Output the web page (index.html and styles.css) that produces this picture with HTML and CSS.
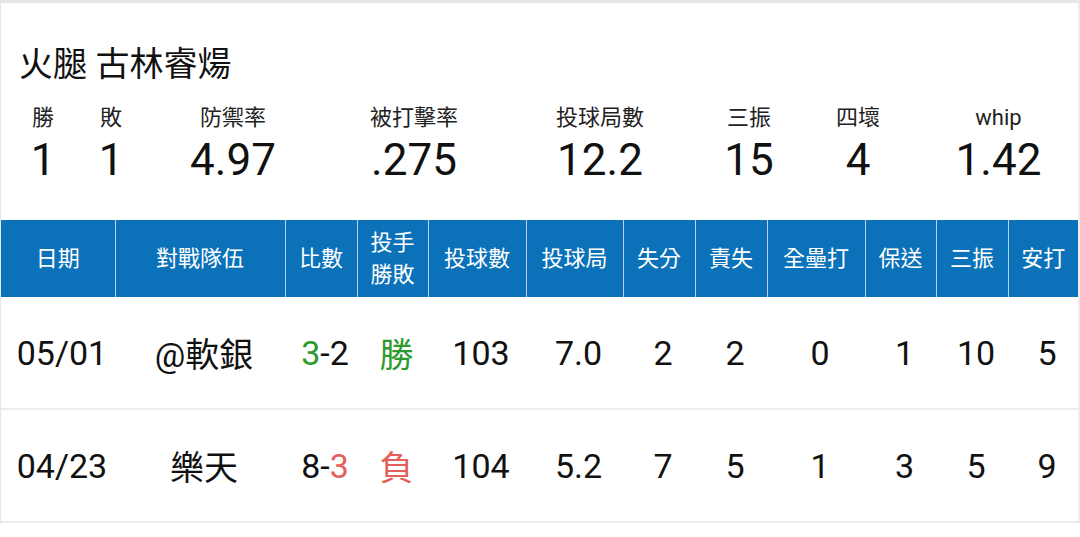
FILE: index.html
```html
<!DOCTYPE html>
<html lang="zh-Hant">
  <head>
    <meta charset="UTF-8" />
    <meta name="viewport" content="width=device-width, initial-scale=1.0" />
    <title>火腿 古林睿煬</title>
    <link rel="stylesheet" href="styles.css">
  </head>
  <body>
    <div class="card">
      <h1 class="player-name">火腿 古林睿煬</h1>

      <!-- season summary -->
      <div class="summary">
        <div class="stat"><span class="stat-label">勝</span><span class="stat-value">1</span></div>
        <div class="stat"><span class="stat-label">敗</span><span class="stat-value">1</span></div>
        <div class="stat"><span class="stat-label">防禦率</span><span class="stat-value">4.97</span></div>
        <div class="stat"><span class="stat-label">被打擊率</span><span class="stat-value">.275</span></div>
        <div class="stat"><span class="stat-label">投球局數</span><span class="stat-value">12.2</span></div>
        <div class="stat"><span class="stat-label">三振</span><span class="stat-value">15</span></div>
        <div class="stat"><span class="stat-label">四壞</span><span class="stat-value">4</span></div>
        <div class="stat stat-last"><span class="stat-label">whip</span><span class="stat-value">1.42</span></div>
      </div>

      <!-- game log -->
      <table class="game-log">
        <colgroup>
          <col style="width: 114px">
          <col style="width: 170px">
          <col style="width: 72px">
          <col style="width: 71px">
          <col style="width: 98px">
          <col style="width: 97px">
          <col style="width: 72px">
          <col style="width: 72px">
          <col style="width: 98px">
          <col style="width: 71px">
          <col style="width: 72px">
          <col style="width: 70px">
        </colgroup>
        <thead>
          <tr>
            <th>日期</th>
            <th>對戰隊伍</th>
            <th>比數</th>
            <th>投手<br>勝敗</th>
            <th>投球數</th>
            <th>投球局</th>
            <th>失分</th>
            <th>責失</th>
            <th>全壘打</th>
            <th>保送</th>
            <th>三振</th>
            <th>安打</th>
          </tr>
        </thead>
        <tbody>
          <tr>
            <td>05/01</td>
            <td>@軟銀</td>
            <td><span class="win">3</span>-2</td>
            <td class="win">勝</td>
            <td>103</td>
            <td>7.0</td>
            <td>2</td>
            <td>2</td>
            <td>0</td>
            <td>1</td>
            <td>10</td>
            <td>5</td>
          </tr>
          <tr>
            <td>04/23</td>
            <td>樂天</td>
            <td>8-<span class="loss">3</span></td>
            <td class="loss">負</td>
            <td>104</td>
            <td>5.2</td>
            <td>7</td>
            <td>5</td>
            <td>1</td>
            <td>3</td>
            <td>5</td>
            <td>9</td>
          </tr>
        </tbody>
      </table>
    </div>
  </body>
</html>
```

FILE: styles.css
```css
body {
  font-family: Roboto, "Noto Sans CJK TC", sans-serif;
  background-color: #fff;
  color: #111;
  margin: 0;
  padding: 0;
}

.card {
  width: 1077px;
  border-top: 3px solid #e6e6e6;
  border-left: 1px solid #e6e6e6;
  border-right: 2px solid #ececec;
  background-color: #fff;
}

.player-name {
  margin: 0;
  padding: 41px 0 0 18px;
  font-size: 34px;
  line-height: 40px;
  font-weight: normal;
  color: #111;
}

.summary {
  display: grid;
  grid-template-columns: 48px 88px 156px 206px 166px 132px 86px 1fr;
  padding-left: 18px;
  margin-top: 20px;
}

.stat {
  display: flex;
  flex-direction: column;
  align-items: center;
}

.stat-last {
  padding-left: 18px;
}

.stat-label {
  font-size: 22px;
  line-height: 28px;
  color: #222;
}

.stat-value {
  margin-top: 4px;
  font-size: 44px;
  line-height: 48px;
  color: #111;
}

.game-log {
  margin-top: 36px;
  width: 1077px;
  table-layout: fixed;
  border-collapse: collapse;
}

.game-log th {
  height: 77px;
  padding: 0;
  background-color: #0b72b9;
  color: #fff;
  font-size: 22px;
  line-height: 32px;
  font-weight: normal;
  text-align: center;
  border-left: 1px solid #b7d4ec;
  border-right: 1px solid #b7d4ec;
}

.game-log th:first-child {
  border-left: none;
}

.game-log th:last-child {
  border-right: none;
}

.game-log td {
  height: 111px;
  padding: 0 0 0 8px;
  font-size: 34px;
  text-align: center;
  color: #111;
  border-bottom: 2px solid #ececec;
}

.game-log .win {
  color: #2e9a2e;
}

.game-log .loss {
  color: #e45f5c;
}
```
